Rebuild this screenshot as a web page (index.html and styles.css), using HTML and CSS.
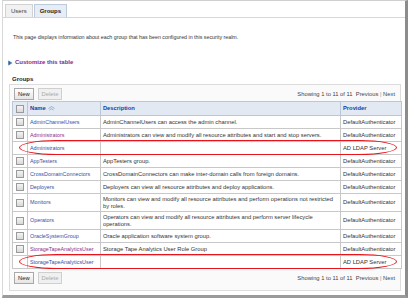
FILE: index.html
```html
<!DOCTYPE html>
<html lang="en">
<head>
    <meta charset="UTF-8">
    <title>Groups</title>
    <link rel="stylesheet" href="styles.css">
</head>
<body>

<div class="frame">
    <div class="tabs">
        <span class="tab">Users</span>
        <span class="tab active">Groups</span>
    </div>

    <p class="intro">This page displays information about each group that has been configured in this security realm.</p>

    <a class="customize" href="#">
        <svg width="5" height="6" viewBox="0 0 5 6"><path d="M0.5 0.5 L4.5 3 L0.5 5.5 Z" fill="#4a7fc0"/><path d="M0.5 0.5 L2.2 3 L0.5 5.5 Z" fill="#2d5b96"/></svg>
        Customize this table
    </a>

    <div class="section-title">Groups</div>

    <div class="panel">
        <div class="toolbar">
            <div class="buttons">
                <span class="btn">New</span>
                <span class="btn disabled">Delete</span>
            </div>
            <div class="paging">Showing 1 to 11 of 11&nbsp; Previous <span class="sep">|</span> Next</div>
        </div>

        <table class="grid">
            <colgroup>
                <col class="c-check">
                <col class="c-name">
                <col class="c-desc">
                <col class="c-prov">
            </colgroup>
            <thead>
                <tr>
                    <th><span class="box"></span></th>
                    <th>Name <svg class="sort" width="7" height="5" viewBox="0 0 7 5"><path d="M0.5 2.5 L3.5 0.5 L6.5 2.5" fill="none" stroke="#8aa6cc" stroke-width="0.9"/><path d="M1.5 4 L3.5 2.7 L5.5 4" fill="none" stroke="#8aa6cc" stroke-width="0.9"/></svg></th>
                    <th>Description</th>
                    <th>Provider</th>
                </tr>
            </thead>
            <tbody>
                <tr>
                    <td><span class="box"></span></td>
                    <td><a href="#">AdminChannelUsers</a></td>
                    <td>AdminChannelUsers can access the admin channel.</td>
                    <td>DefaultAuthenticator</td>
                </tr>
                <tr>
                    <td><span class="box"></span></td>
                    <td><a class="visited" href="#">Administrators</a></td>
                    <td>Administrators can view and modify all resource attributes and start and stop servers.</td>
                    <td>DefaultAuthenticator</td>
                </tr>
                <tr class="marked">
                    <td></td>
                    <td><a href="#">Administrators</a></td>
                    <td></td>
                    <td>AD LDAP Server</td>
                </tr>
                <tr>
                    <td><span class="box"></span></td>
                    <td><a href="#">AppTesters</a></td>
                    <td>AppTesters group.</td>
                    <td>DefaultAuthenticator</td>
                </tr>
                <tr>
                    <td><span class="box"></span></td>
                    <td><a href="#">CrossDomainConnectors</a></td>
                    <td>CrossDomainConnectors can make inter-domain calls from foreign domains.</td>
                    <td>DefaultAuthenticator</td>
                </tr>
                <tr>
                    <td><span class="box"></span></td>
                    <td><a href="#">Deployers</a></td>
                    <td>Deployers can view all resource attributes and deploy applications.</td>
                    <td>DefaultAuthenticator</td>
                </tr>
                <tr class="tall">
                    <td><span class="box"></span></td>
                    <td><a href="#">Monitors</a></td>
                    <td>Monitors can view and modify all resource attributes and perform operations not restricted by roles.</td>
                    <td>DefaultAuthenticator</td>
                </tr>
                <tr class="tall">
                    <td><span class="box"></span></td>
                    <td><a href="#">Operators</a></td>
                    <td>Operators can view and modify all resource attributes and perform server lifecycle operations.</td>
                    <td>DefaultAuthenticator</td>
                </tr>
                <tr>
                    <td><span class="box"></span></td>
                    <td><a href="#">OracleSystemGroup</a></td>
                    <td>Oracle application software system group.</td>
                    <td>DefaultAuthenticator</td>
                </tr>
                <tr>
                    <td><span class="box"></span></td>
                    <td><a class="visited" href="#">StorageTapeAnalyticsUser</a></td>
                    <td>Storage Tape Analytics User Role Group</td>
                    <td>DefaultAuthenticator</td>
                </tr>
                <tr class="marked">
                    <td></td>
                    <td><a href="#">StorageTapeAnalyticsUser</a></td>
                    <td></td>
                    <td>AD LDAP Server</td>
                </tr>
            </tbody>
        </table>

        <div class="toolbar bottom">
            <div class="buttons">
                <span class="btn">New</span>
                <span class="btn disabled">Delete</span>
            </div>
            <div class="paging">Showing 1 to 11 of 11&nbsp; Previous <span class="sep">|</span> Next</div>
        </div>
    </div>
</div>

</body>
</html>
```

FILE: styles.css
```css
body {
    margin: 0;
    padding: 0;
    background-color: #ffffff;
    font-family: "Liberation Sans", Arial, sans-serif;
    font-size: 5.8px;
    color: #333;
}

.frame {
    width: 406px;
    height: 298px;
    margin-left: 2px;
    box-sizing: border-box;
    border-top: 1px solid #cfcfcf;
    border-left: 1px solid #d8d8d8;
    border-right: 3px solid #8c8c8c;
    border-bottom: 3px solid #9a9a9a;
    background-color: #fff;
}

/* tabs */
.tabs {
    display: flex;
    align-items: flex-end;
    gap: 1px;
    height: 16px;
    padding-left: 2px;
    border-bottom: 1px solid #c9d9ea;
}
.tab {
    display: flex;
    align-items: center;
    height: 12px;
    padding: 0 5px;
    background-color: #f1f1f1;
    border: 1px solid #d2d2d2;
    border-bottom: none;
    color: #444;
    font-size: 6px;
}
.tab.active {
    background-color: #e6edf5;
    border-color: #bccbdc;
    font-weight: bold;
    color: #222;
    padding: 0 5px;
}

.intro {
    margin: 16px 0 0 10px;
    font-size: 5.3px;
    line-height: 7px;
}

.customize {
    display: flex;
    align-items: center;
    gap: 2px;
    margin: 18px 0 0 5px;
    color: #7b2c8e;
    font-weight: bold;
    text-decoration: none;
    font-size: 6px;
    line-height: 7px;
}

.section-title {
    margin: 10px 0 0 9px;
    font-weight: bold;
    color: #222;
    font-size: 6px;
    line-height: 7px;
}

/* panel */
.panel {
    margin: 1px 4px 0 6px;
    padding: 3px 3px 6px 2px;
    border: 1px solid #dcdcdc;
    background-color: #fafafa;
}

.toolbar {
    display: flex;
    justify-content: space-between;
    align-items: center;
    padding: 0 2px;
    height: 12px;
}
.toolbar.bottom {
    margin-top: 3px;
}
.buttons {
    display: flex;
    gap: 4px;
}
.btn {
    display: flex;
    align-items: center;
    height: 10px;
    padding: 0 3px;
    border: 1px solid #a9a9a9;
    background: linear-gradient(#ffffff, #e4e4e4);
    color: #222;
}
.btn.disabled {
    color: #a8a8a8;
    border-color: #cfcfcf;
    background: #f0f0f0;
}
.paging {
    color: #444;
}
.sep {
    color: #888;
}

/* table */
.grid {
    width: 390px;
    margin-top: 1px;
    border-collapse: collapse;
    background-color: #fff;
}
.c-check { width: 15px; }
.c-name { width: 73px; }
.c-desc { width: 241px; }
.c-prov { width: 61px; }

.grid th, .grid td {
    padding: 0 2px;
    border: 1px solid #c8c8c8;
    text-align: left;
    vertical-align: middle;
    line-height: 7px;
}
.grid th {
    height: 13px;
    background-color: #e2e9f2;
    border-color: #b9c7d8;
    color: #1c3c9a;
    font-weight: bold;
}
.grid td {
    height: 12px;
}
.grid tr.tall td {
    height: 17px;
}
.grid td:first-child, .grid th:first-child {
    text-align: center;
    padding: 0;
}
.grid a {
    color: #3251a8;
    text-decoration: none;
    font-size: 5.4px;
}
.grid a.visited {
    color: #8a2d8e;
}
.sort {
    vertical-align: middle;
    margin-left: 1px;
}

.box {
    display: inline-block;
    width: 6px;
    height: 6px;
    border: 1px solid #9a9a9a;
    background: linear-gradient(#f4f4f4, #d9d9d9);
    vertical-align: middle;
}

.grid tr.marked td:first-child {
    position: relative;
}
.grid tr.marked td:first-child::after {
    content: "";
    position: absolute;
    left: 6px;
    top: -2px;
    width: 376px;
    height: 13px;
    border: 1.5px solid #e8141c;
    border-radius: 40px / 8px;
    pointer-events: none;
    z-index: 2;
}
```
